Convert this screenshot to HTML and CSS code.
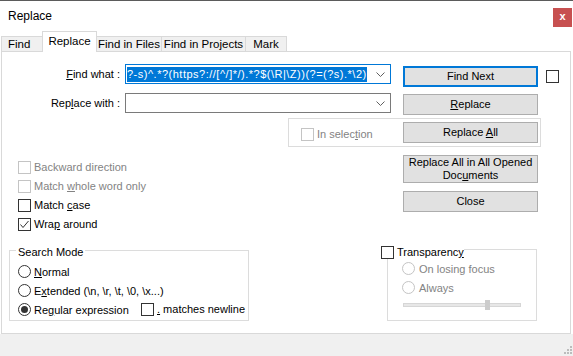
FILE: index.html
```html
<!DOCTYPE html>
<html lang="en">
<head>
    <meta charset="UTF-8">
    <title>Replace</title>
    <link rel="stylesheet" href="styles.css">
</head>
<body>
    <div class="dialog">
        <div class="titlebar">
            <span class="title">Replace</span>
            <span class="close">x</span>
        </div>

        <div class="tabs">
            <div class="tab tab-find">Find</div>
            <div class="tab tab-replace active">Replace</div>
            <div class="tab tab-files">Find in Files</div>
            <div class="tab tab-projects">Find in Projects</div>
            <div class="tab tab-mark">Mark</div>
        </div>

        <div class="panel">
            <div class="row row-find">
                <span class="field-label"><u>F</u>ind what :</span>
                <div class="combo focused">
                    <span class="combo-text"><span class="sel">?-s)^.*?(https?://[^/]*/).*?$(\R|\Z))(?=(?s).*\2)</span></span>
                    <svg class="chevron" width="9" height="5" viewBox="0 0 9 5"><polyline points="0.5,0.5 4.5,4.5 8.5,0.5" fill="none" stroke="#606060" stroke-width="1"/></svg>
                </div>
                <button class="btn default">Find Next</button>
                <span class="box side-check"></span>
            </div>

            <div class="row row-replace">
                <span class="field-label">Rep<u>l</u>ace with :</span>
                <div class="combo">
                    <span class="combo-text"></span>
                    <svg class="chevron" width="9" height="5" viewBox="0 0 9 5"><polyline points="0.5,0.5 4.5,4.5 8.5,0.5" fill="none" stroke="#606060" stroke-width="1"/></svg>
                </div>
                <button class="btn"><u>R</u>eplace</button>
            </div>

            <div class="selection-box">
                <label class="check-item disabled in-selection"><span class="box"></span><span>In selec<u>t</u>ion</span></label>
                <button class="btn">Replace <u>A</u>ll</button>
            </div>

            <div class="options">
                <div class="check-list">
                    <label class="check-item disabled"><span class="box"></span><span>Backward direction</span></label>
                    <label class="check-item disabled"><span class="box"></span><span>Match <u>w</u>hole word only</span></label>
                    <label class="check-item"><span class="box"></span><span>Match <u>c</u>ase</span></label>
                    <label class="check-item"><span class="box"><svg width="11" height="11" viewBox="0 0 11 11"><polyline points="1.5,5.5 4,8.5 9.5,2" fill="none" stroke="#333" stroke-width="1"/></svg></span><span>Wra<u>p</u> around</span></label>
                </div>
                <div class="button-list">
                    <button class="btn tall">Replace All in All Opened<br>Doc<u>u</u>ments</button>
                    <button class="btn">Close</button>
                </div>
            </div>

            <div class="groups">
                <fieldset class="group search-mode">
                    <legend>Search Mode</legend>
                    <div class="radio-item"><span class="radio"></span><span><u>N</u>ormal</span></div>
                    <div class="radio-item"><span class="radio"></span><span>E<u>x</u>tended (\n, \r, \t, \0, \x...)</span></div>
                    <div class="radio-row">
                        <div class="radio-item regex"><span class="radio on"></span><span>Re<u>g</u>ular expression</span></div>
                        <label class="check-item"><span class="box"></span><span><u>.</u> matches newline</span></label>
                    </div>
                </fieldset>

                <fieldset class="group transparency">
                    <legend><label class="check-item"><span class="box"></span><span>Transparenc<u>y</u></span></label></legend>
                    <div class="radio-item disabled"><span class="radio"></span><span>On losing focus</span></div>
                    <div class="radio-item disabled"><span class="radio"></span><span>Always</span></div>
                    <div class="slider"><span class="thumb"></span></div>
                </fieldset>
            </div>
        </div>

        <div class="statusbar">
            <svg class="grip" width="9" height="9" viewBox="0 0 9 9">
                <rect x="7" y="1" width="2" height="2" fill="#bcbcbc"/>
                <rect x="4" y="4" width="2" height="2" fill="#bcbcbc"/>
                <rect x="7" y="4" width="2" height="2" fill="#bcbcbc"/>
                <rect x="1" y="7" width="2" height="2" fill="#bcbcbc"/>
                <rect x="4" y="7" width="2" height="2" fill="#bcbcbc"/>
                <rect x="7" y="7" width="2" height="2" fill="#bcbcbc"/>
            </svg>
        </div>
    </div>
</body>
</html>
```

FILE: styles.css
```css
body {
    margin: 0;
    font-family: "Segoe UI", "Liberation Sans", Arial, sans-serif;
    font-size: 11px;
    color: #000;
    background-color: #fff;
}

u {
    text-underline-offset: 1px;
}

.dialog {
    width: 573px;
    height: 356px;
    box-sizing: border-box;
    border-top: 1px solid #5b5b5b;
    display: flex;
    flex-direction: column;
    overflow: hidden;
}

/* title bar */
.titlebar {
    height: 30px;
    display: flex;
    justify-content: space-between;
    align-items: flex-start;
    flex: none;
}

.title {
    padding-left: 8px;
    line-height: 30px;
    font-size: 12px;
}

.close {
    width: 19px;
    height: 19px;
    margin-top: 7px;
    margin-right: 1px;
    background-color: #c75050;
    color: #fff;
    font-weight: bold;
    font-size: 11px;
    line-height: 17px;
    text-align: center;
}

/* tabs */
.tabs {
    height: 20px;
    display: flex;
    align-items: flex-end;
    padding-left: 1px;
    flex: none;
    position: relative;
    z-index: 1;
}

.tab {
    height: 15px;
    box-sizing: border-box;
    border: 1px solid #d9d9d9;
    border-bottom: none;
    margin-right: -1px;
    background-color: #f0f0f0;
    line-height: 14px;
    text-align: center;
    white-space: nowrap;
    font-size: 11.5px;
}

.tab.active {
    height: 21px;
    margin-bottom: -1px;
    background-color: #fff;
    line-height: 18px;
    position: relative;
    z-index: 1;
}

.tab-find { width: 42px; text-align: left; padding-left: 6px; }
.tab-replace { width: 55px; }
.tab-files { width: 66px; }
.tab-projects { width: 85px; }
.tab-mark { width: 42px; }

/* main panel */
.panel {
    height: 283px;
    box-sizing: border-box;
    margin: 0 2px 0 1px;
    border: 1px solid #d9d9d9;
    background-color: #fff;
    flex: none;
}

.row {
    display: flex;
    align-items: flex-start;
}

.row-find {
    margin-top: 12px;
}

.row-replace {
    margin-top: 6px;
}

.field-label {
    width: 118px;
    margin-right: 5px;
    text-align: right;
    line-height: 20px;
}

.combo {
    width: 266px;
    height: 20px;
    box-sizing: border-box;
    border: 1px solid #7a7a7a;
    display: flex;
    align-items: center;
    overflow: hidden;
}

.combo.focused {
    border-color: #0078d7;
}

.combo-text {
    flex: 1;
    overflow: hidden;
    white-space: nowrap;
    padding-left: 1px;
}

.sel {
    background-color: #0078d7;
    color: #fff;
    line-height: 15px;
    letter-spacing: 0.5px;
    display: inline-block;
}

.chevron {
    flex: none;
    margin: 0 5px 0 8px;
}

.btn {
    width: 135px;
    height: 21px;
    box-sizing: border-box;
    padding: 0;
    border: 1px solid #adadad;
    background-color: #e1e1e1;
    font: inherit;
    color: #000;
    line-height: 13px;
}

.btn.default {
    border: 2px solid #0078d7;
}

.row-find .btn {
    margin-left: 12px;
    margin-top: 2px;
}

.row-replace .btn {
    margin-left: 12px;
    margin-top: 1px;
}

.side-check {
    margin-left: 8px;
    margin-top: 6px;
}

/* check boxes and radios */
.box {
    width: 13px;
    height: 13px;
    box-sizing: border-box;
    border: 1px solid #333;
    background-color: #fff;
    flex: none;
    margin-right: 3px;
    display: flex;
    align-items: center;
    justify-content: center;
}

.check-item {
    display: flex;
    align-items: center;
    height: 13px;
    line-height: 13px;
    white-space: nowrap;
}

.check-item.disabled {
    color: #838383;
}

.check-item.disabled .box {
    border-color: #c4c4c4;
}

.selection-box {
    width: 253px;
    height: 29px;
    box-sizing: border-box;
    margin: 3px 0 0 286px;
    border: 1px solid #dcdcdc;
    display: flex;
    align-items: center;
    padding-left: 12px;
}

.in-selection {
    width: 102px;
    margin-top: 3px;
}

.options {
    display: flex;
    margin-top: 8px;
}

.check-list {
    width: 385px;
    margin-left: 16px;
    padding-top: 6px;
}

.check-list .check-item {
    margin-bottom: 6px;
}

.button-list {
    display: flex;
    flex-direction: column;
    gap: 8px;
}

.btn.tall {
    height: 28px;
    line-height: 13px;
}

/* group boxes */
.groups {
    display: flex;
    align-items: flex-start;
    margin-top: 3px;
}

.group {
    margin: 0;
    padding: 0;
    height: 81px;
    box-sizing: border-box;
    border: 1px solid #dcdcdc;
}

.group legend {
    padding: 4px 2px 0;
    line-height: 16px;
}

.search-mode {
    width: 240px;
    margin-left: 7px;
    padding-left: 8px;
}

.search-mode legend {
    margin-left: -2px;
}

.radio-item {
    display: flex;
    align-items: center;
    height: 19px;
    white-space: nowrap;
}

.search-mode > .radio-item:first-of-type {
    margin-top: 2px;
}

.radio {
    width: 13px;
    height: 13px;
    box-sizing: border-box;
    border: 1px solid #333;
    border-radius: 50%;
    margin-right: 3px;
    flex: none;
    display: flex;
    align-items: center;
    justify-content: center;
}

.radio.on::after {
    content: "";
    width: 7px;
    height: 7px;
    border-radius: 50%;
    background-color: #333;
}

.radio-item.disabled {
    color: #838383;
}

.radio-item.disabled .radio {
    border-color: #c4c4c4;
}

.radio-row {
    display: flex;
    align-items: center;
}

.regex {
    width: 123px;
}

.transparency {
    width: 150px;
    margin-left: 138px;
    padding-left: 14px;
}

.transparency legend {
    margin-left: -21px;
    padding: 6px 0 0;
}

.transparency > .radio-item:first-of-type {
    margin-top: 0;
}

.transparency .radio {
    margin-right: 4px;
}

.slider {
    width: 118px;
    height: 4px;
    margin: 6px 0 0 1px;
    box-sizing: border-box;
    border: 1px solid #d6d6d6;
    background-color: #e7e7e7;
    position: relative;
}

.thumb {
    position: absolute;
    left: 81px;
    top: -4px;
    width: 5px;
    height: 10px;
    background-color: #cccccc;
}

/* bottom strip */
.statusbar {
    flex: 1;
    background-color: #f0f0f0;
    display: flex;
    justify-content: flex-end;
    align-items: flex-end;
}

.grip {
    margin: 0 1px 2px 0;
}
```
